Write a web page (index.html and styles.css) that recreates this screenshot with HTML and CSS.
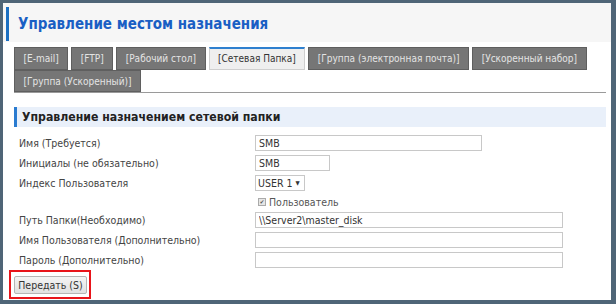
FILE: index.html
```html
<!DOCTYPE html>
<html lang="ru">
<head>
    <meta charset="UTF-8">
    <title>Управление местом назначения</title>
    <link rel="stylesheet" href="styles.css">
</head>
<body>
    <div class="frame">
        <header class="page-head">
            <h1>Управление местом назначения</h1>
        </header>

        <nav class="tabs">
            <a class="tab">[E-mail]</a>
            <a class="tab">[FTP]</a>
            <a class="tab">[Рабочий стол]</a>
            <a class="tab active">[Сетевая Папка]</a>
            <a class="tab">[Группа (электронная почта)]</a>
            <a class="tab">[Ускоренный набор]</a>
            <a class="tab">[Группа (Ускоренный)]</a>
        </nav>

        <section class="panel">
            <h2>Управление назначением сетевой папки</h2>

            <div class="form">
                <label class="lbl">Имя (Требуется)</label>
                <div class="fld"><input type="text" class="w-lg" value="SMB"></div>

                <label class="lbl">Инициалы (не обязательно)</label>
                <div class="fld"><input type="text" class="w-sm" value="SMB"></div>

                <label class="lbl">Индекс Пользователя</label>
                <div class="fld"><span class="select">USER 1 <span class="arrow">▼</span></span></div>

                <span class="lbl"></span>
                <div class="fld check"><span class="box">✔</span>Пользователь</div>

                <label class="lbl">Путь Папки(Необходимо)</label>
                <div class="fld"><input type="text" class="w-xl" value="\\Server2\master_disk"></div>

                <label class="lbl">Имя Пользователя (Дополнительно)</label>
                <div class="fld"><input type="text" class="w-xl" value=""></div>

                <label class="lbl">Пароль (Дополнительно)</label>
                <div class="fld"><input type="password" class="w-xl" value=""></div>
            </div>

            <div class="submit-row">
                <div class="mark">
                    <button>Передать (S)</button>
                </div>
            </div>
        </section>
    </div>
</body>
</html>
```

FILE: styles.css
```css
html, body {
    height: 100%;
}

body {
    margin: 0;
    background: #4f6577;
    font-family: "DejaVu Sans Condensed", "DejaVu Sans", Verdana, sans-serif;
    font-size: 10.5px;
    color: #333;
}

.frame {
    box-sizing: border-box;
    height: calc(100% - 7px);
    margin: 3px 5px 4px 3px;
    background: #fff;
}

.page-head {
    background: #f6f6f6;
    padding: 4px 0 1px 3px;
}

.page-head h1 {
    margin: 0;
    border-left: 3px solid #1b6fc2;
    padding: 7px 0 6px 9px;
    font-size: 15px;
    line-height: 21px;
    color: #1a5fc4;
}

.tabs {
    display: flex;
    flex-wrap: wrap;
    column-gap: 3px;
    margin: 5px 5px 0 11px;
    padding-right: 6px;
    border-bottom: 1px solid #9a9a9a;
}

.tab {
    box-sizing: border-box;
    height: 23px;
    line-height: 21px;
    padding: 0 8.5px;
    background: #767676;
    border: 1px solid #5f5f5f;
    color: #e4e4e4;
    font-size: 10px;
    white-space: nowrap;
}

.tab.active {
    background: #efefef;
    color: #333;
    border-color: #cfcfcf;
    border-top: 2px solid #2f80cf;
    line-height: 20px;
}

.tab:last-child {
    height: 22px;
}

.panel {
    padding: 14px 5px 0 11px;
}

.panel h2 {
    margin: 0 0 6px;
    background: #e9f0fa;
    border-left: 3px solid #2a7bd0;
    padding: 0 0 0 5px;
    height: 20px;
    line-height: 21px;
    font-size: 12.2px;
    color: #222;
}

.form {
    display: grid;
    grid-template-columns: 236px 1fr;
    grid-template-rows: 20px 20px 20px 17px 20px 20px 20px;
    padding-left: 5px;
}

.lbl {
    line-height: 20px;
    color: #444;
}

.fld {
    display: flex;
    align-items: center;
}

.fld input {
    box-sizing: border-box;
    height: 16px;
    border: 1px solid #c8c8c8;
    padding: 0 3px;
    font: 10.5px/16px "DejaVu Sans", sans-serif;
    font-stretch: condensed;
    color: #333;
}

.w-sm { width: 75px; }
.w-lg { width: 227px; }
.w-xl { width: 308px; }

.select {
    box-sizing: border-box;
    height: 16px;
    width: 50px;
    border: 1px solid #c8c8c8;
    padding: 0 2px;
    line-height: 14px;
    white-space: nowrap;
}

.select .arrow {
    font-size: 6px;
    vertical-align: 2px;
}

.check {
    padding-left: 3px;
    color: #555;
}

.check .box {
    box-sizing: border-box;
    display: inline-flex;
    align-items: center;
    justify-content: center;
    width: 8px;
    height: 8px;
    margin-right: 3px;
    background: #e6e6e6;
    border: 1px solid #aaa;
    font-size: 6px;
    color: #555;
}

.submit-row {
    margin-left: -5px;
}

.mark {
    display: inline-block;
    border: 2px solid #e8141a;
    padding: 4px 2px 3px 3px;
}

.mark button {
    display: block;
    height: 18px;
    width: 73px;
    padding: 0;
    background: linear-gradient(#f4f4f4, #e1e1e1);
    border: 1px solid #b5b5b5;
    border-radius: 2px;
    font: 10.5px "DejaVu Sans Condensed", "DejaVu Sans", sans-serif;
    color: #333;
}
```
